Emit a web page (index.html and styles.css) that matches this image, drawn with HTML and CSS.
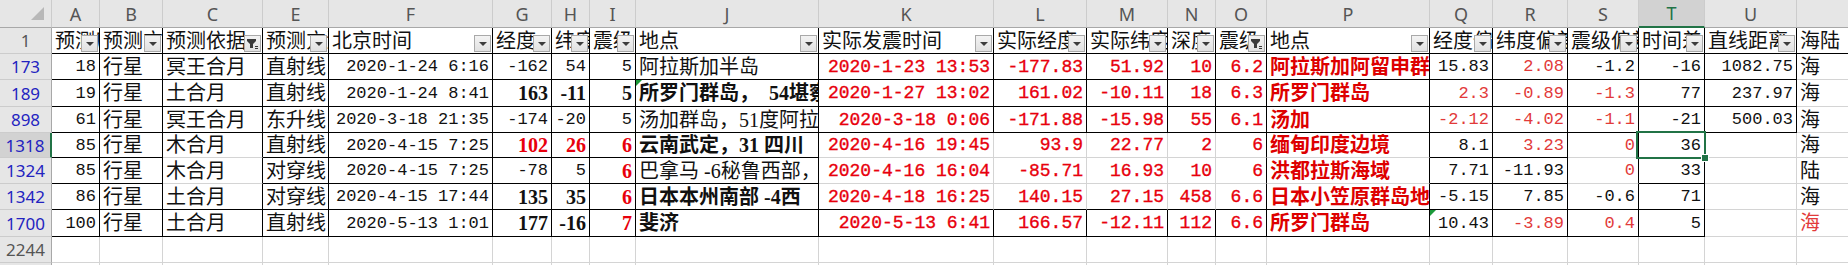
FILE: index.html
```html
<!DOCTYPE html>
<html lang="zh-CN">
<head>
<meta charset="utf-8">
<title>地震预测表</title>
<link rel="stylesheet" href="styles.css">
</head>
<body>
<div class="sheet">
  <!-- column headers -->
  <div class="c ch corner"></div>
  <div class="c ch">A</div><div class="c ch">B</div><div class="c ch">C</div><div class="c ch">E</div>
  <div class="c ch">F</div><div class="c ch">G</div><div class="c ch">H</div><div class="c ch">I</div>
  <div class="c ch">J</div><div class="c ch">K</div><div class="c ch">L</div><div class="c ch">M</div>
  <div class="c ch">N</div><div class="c ch">O</div><div class="c ch">P</div><div class="c ch">Q</div>
  <div class="c ch">R</div><div class="c ch">S</div><div class="c ch chs">T</div><div class="c ch">U</div>
  <div class="c ch"></div>

  <!-- row 1 -->
  <div class="c rh rhg">1</div>
  <div class="c t k">预测序号<span class="fb"></span></div>
  <div class="c t k">预测方式<span class="fb"></span></div>
  <div class="c t k">预测依据<span class="fb ff"><svg viewBox="0 0 15 15" width="15" height="15"><path d="M2 3h9v2l-3 3v4h-3v-4l-3-3z" fill="#3a3a3a"/><rect x="10" y="10" width="3" height="1" fill="#3a3a3a"/><rect x="10" y="12" width="3" height="1" fill="#3a3a3a"/></svg></span></div>
  <div class="c t k">预测方法<span class="fb"></span></div>
  <div class="c t k">北京时间<span class="fb"></span></div>
  <div class="c t k">经度<span class="fb"></span></div>
  <div class="c t k">纬度<span class="fb"></span></div>
  <div class="c t k">震级<span class="fb"></span></div>
  <div class="c t k">地点<span class="fb"></span></div>
  <div class="c t k">实际发震时间<span class="fb"></span></div>
  <div class="c t k">实际经度<span class="fb"></span></div>
  <div class="c t k">实际纬度<span class="fb"></span></div>
  <div class="c t k">深度<span class="fb"></span></div>
  <div class="c t k">震级<span class="fb ff"><svg viewBox="0 0 15 15" width="15" height="15"><path d="M2 3h9v2l-3 3v4h-3v-4l-3-3z" fill="#3a3a3a"/><rect x="10" y="10" width="3" height="1" fill="#3a3a3a"/><rect x="10" y="12" width="3" height="1" fill="#3a3a3a"/></svg></span></div>
  <div class="c t k">地点<span class="fb"></span></div>
  <div class="c t k">经度偏差<span class="fb"></span></div>
  <div class="c t k">纬度偏差<span class="fb"></span></div>
  <div class="c t k">震级偏差<span class="fb"></span></div>
  <div class="c t k">时间差<span class="fb"></span></div>
  <div class="c t k">直线距离<span class="fb"></span></div>
  <div class="c t kb">海陆</div>

  <!-- row 173 -->
  <div class="c rh">173</div>
  <div class="c n k">18</div>
  <div class="c t k">行星</div>
  <div class="c t k">冥王合月</div>
  <div class="c t k">直射线</div>
  <div class="c n k">2020-1-24 6:16</div>
  <div class="c n k">-162</div>
  <div class="c n k">54</div>
  <div class="c n k">5</div>
  <div class="c t k">阿拉斯加半岛</div>
  <div class="c n nr k">2020-1-23 13:53</div>
  <div class="c n nr k">-177.83</div>
  <div class="c n nr k">51.92</div>
  <div class="c n nr k">10</div>
  <div class="c n nr k">6.2</div>
  <div class="c t tb pr k">阿拉斯加阿留申群岛</div>
  <div class="c n k">15.83</div>
  <div class="c n rl k">2.08</div>
  <div class="c n k">-1.2</div>
  <div class="c n k">-16</div>
  <div class="c n k">1082.75</div>
  <div class="c t">海</div>

  <!-- row 189 -->
  <div class="c rh">189</div>
  <div class="c n k">19</div>
  <div class="c t k">行星</div>
  <div class="c t k">土合月</div>
  <div class="c t k">直射线</div>
  <div class="c n k">2020-1-24 8:41</div>
  <div class="c n b k">163</div>
  <div class="c n b k">-11</div>
  <div class="c n b k">5</div>
  <div class="c t tb k err">所罗门群岛，　54堪察加</div>
  <div class="c n nr k">2020-1-27 13:02</div>
  <div class="c n nr k">161.02</div>
  <div class="c n nr k">-10.11</div>
  <div class="c n nr k">18</div>
  <div class="c n nr k">6.3</div>
  <div class="c t tb pr k">所罗门群岛</div>
  <div class="c n rl k">2.3</div>
  <div class="c n rl k">-0.89</div>
  <div class="c n rl k">-1.3</div>
  <div class="c n k">77</div>
  <div class="c n k">237.97</div>
  <div class="c t">海</div>

  <!-- row 898 -->
  <div class="c rh">898</div>
  <div class="c n k">61</div>
  <div class="c t k">行星</div>
  <div class="c t k">冥王合月</div>
  <div class="c t k">东升线</div>
  <div class="c n k">2020-3-18 21:35</div>
  <div class="c n k">-174</div>
  <div class="c n k">-20</div>
  <div class="c n k">5</div>
  <div class="c t k">汤加群岛，51度阿拉斯加</div>
  <div class="c n nr k">2020-3-18 0:06</div>
  <div class="c n nr k">-171.88</div>
  <div class="c n nr k">-15.98</div>
  <div class="c n nr k">55</div>
  <div class="c n nr k">6.1</div>
  <div class="c t tb pr k">汤加</div>
  <div class="c n rl k">-2.12</div>
  <div class="c n rl k">-4.02</div>
  <div class="c n rl k">-1.1</div>
  <div class="c n k">-21</div>
  <div class="c n k">500.03</div>
  <div class="c t">海</div>

  <!-- row 1318 -->
  <div class="c rh rhs">1318</div>
  <div class="c n k">85</div>
  <div class="c t k">行星</div>
  <div class="c t kr">木合月</div>
  <div class="c t k">直射线</div>
  <div class="c n k">2020-4-15 7:25</div>
  <div class="c n b rb k">102</div>
  <div class="c n b rb k">26</div>
  <div class="c n b rb k">6</div>
  <div class="c t tb k">云南武定，31 四川</div>
  <div class="c n nr">2020-4-16 19:45</div>
  <div class="c n nr">93.9</div>
  <div class="c n nr">22.77</div>
  <div class="c n nr">2</div>
  <div class="c n nr kr">6</div>
  <div class="c t tb pr kr">缅甸印度边境</div>
  <div class="c n k">8.1</div>
  <div class="c n rl k">3.23</div>
  <div class="c n rl kr">0</div>
  <div class="c n k selc">36<span class="sel"><span class="handle"></span></span></div>
  <div class="c n"></div>
  <div class="c t">海</div>

  <!-- row 1324 -->
  <div class="c rh">1324</div>
  <div class="c n k">85</div>
  <div class="c t k">行星</div>
  <div class="c t kr">木合月</div>
  <div class="c t k">对穿线</div>
  <div class="c n k">2020-4-15 7:25</div>
  <div class="c n k">-78</div>
  <div class="c n k">5</div>
  <div class="c n b rb k">6</div>
  <div class="c t k">巴拿马 -6秘鲁西部，</div>
  <div class="c n nr">2020-4-16 16:04</div>
  <div class="c n nr">-85.71</div>
  <div class="c n nr">16.93</div>
  <div class="c n nr">10</div>
  <div class="c n nr kr">6</div>
  <div class="c t tb pr kr">洪都拉斯海域</div>
  <div class="c n k">7.71</div>
  <div class="c n k">-11.93</div>
  <div class="c n rl kr">0</div>
  <div class="c n k">33</div>
  <div class="c n"></div>
  <div class="c t">陆</div>

  <!-- row 1342 -->
  <div class="c rh">1342</div>
  <div class="c n k">86</div>
  <div class="c t k">行星</div>
  <div class="c t k">土合月</div>
  <div class="c t k">对穿线</div>
  <div class="c n k">2020-4-15 17:44</div>
  <div class="c n b k">135</div>
  <div class="c n b k">35</div>
  <div class="c n b rb k">6</div>
  <div class="c t tb k">日本本州南部 -4西</div>
  <div class="c n nr kb">2020-4-18 16:25</div>
  <div class="c n nr kb">140.15</div>
  <div class="c n nr kb">27.15</div>
  <div class="c n nr kb">458</div>
  <div class="c n nr k">6.6</div>
  <div class="c t tb pr k">日本小笠原群岛地区</div>
  <div class="c n k">-5.15</div>
  <div class="c n k">7.85</div>
  <div class="c n k">-0.6</div>
  <div class="c n k">71</div>
  <div class="c n"></div>
  <div class="c t">海</div>

  <!-- row 1700 -->
  <div class="c rh">1700</div>
  <div class="c n k">100</div>
  <div class="c t k">行星</div>
  <div class="c t k">土合月</div>
  <div class="c t k">直射线</div>
  <div class="c n k">2020-5-13 1:01</div>
  <div class="c n b k">177</div>
  <div class="c n b k">-16</div>
  <div class="c n b rb k">7</div>
  <div class="c t tb k">斐济</div>
  <div class="c n nr k">2020-5-13 6:41</div>
  <div class="c n nr k">166.57</div>
  <div class="c n nr k">-12.11</div>
  <div class="c n nr k">112</div>
  <div class="c n nr k">6.6</div>
  <div class="c t tb pr k">所罗门群岛</div>
  <div class="c n k err">10.43</div>
  <div class="c n rl k">-3.89</div>
  <div class="c n rl k">0.4</div>
  <div class="c n k">5</div>
  <div class="c n"></div>
  <div class="c t rl">海</div>

  <!-- row 2244 -->
  <div class="c rh rhg">2244</div>
  <div class="c"></div><div class="c"></div><div class="c"></div><div class="c"></div>
  <div class="c"></div><div class="c"></div><div class="c"></div><div class="c"></div>
  <div class="c"></div><div class="c"></div><div class="c"></div><div class="c"></div>
  <div class="c"></div><div class="c"></div><div class="c"></div><div class="c"></div>
  <div class="c"></div><div class="c"></div><div class="c"></div><div class="c"></div>
  <div class="c"></div>

  <!-- partially visible row -->
  <div class="c rh"></div>
  <div class="c"></div><div class="c"></div><div class="c"></div><div class="c"></div>
  <div class="c"></div><div class="c"></div><div class="c"></div><div class="c"></div>
  <div class="c"></div><div class="c"></div><div class="c"></div><div class="c"></div>
  <div class="c"></div><div class="c"></div><div class="c"></div><div class="c"></div>
  <div class="c"></div><div class="c"></div><div class="c"></div><div class="c"></div>
  <div class="c"></div>
</div>
</body>
</html>
```

FILE: styles.css
```css
html, body {
  margin: 0;
  padding: 0;
  background: #ffffff;
  overflow: hidden;
}

.sheet {
  display: grid;
  grid-template-columns: 52px 48px 63px 100px 66px 164px 59px 38px 46px 183px 175px 93px 81px 48px 51px 163px 63px 75px 71px 66px 92px 60px;
  grid-template-rows: 28px 26px 26px 27px 26px 25px 26px 26px 27px 26px 26px;
  width: 1848px;
  height: 265px;
  overflow: hidden;
}

.c {
  box-sizing: border-box;
  border-right: 1px solid #d4d4d4;
  border-bottom: 1px solid #d4d4d4;
  overflow: hidden;
  white-space: nowrap;
  display: flex;
  align-items: center;
  padding: 0 3px;
  position: relative;
  color: #111111;
  min-width: 0;
  line-height: 1;
}

/* black borders */
.k { border-right-color: #000; border-bottom-color: #000; }
.kr { border-right-color: #000; }
.kb { border-bottom-color: #000; }

/* column header */
.ch {
  background: #e6e6e6;
  justify-content: center;
  font-family: "Noto Sans", "Open Sans", sans-serif;
  font-size: 18px;
  color: #555555;
  border-right-color: #cccccc;
  border-bottom-color: #a8a8a8;
  padding: 0;
}
.chs {
  background: #d2d2d2;
  color: #217346;
  border-bottom: 2px solid #217346;
}
.corner::after {
  content: "";
  position: absolute;
  right: 7px;
  bottom: 7px;
  border-left: 13px solid transparent;
  border-bottom: 13px solid #b8b8b8;
}

/* row header */
.rh {
  background: #e6e6e6;
  justify-content: center;
  font-family: "Noto Sans", "Open Sans", sans-serif;
  font-size: 17px;
  color: #2323c0;
  border-right-color: #a8a8a8;
  border-bottom-color: #cccccc;
  padding: 0;
}
.rhg { color: #555555; }
.rhs {
  background: #d2d2d2;
  border-right: 2px solid #217346;
}

/* text cells */
.t {
  font-family: "Liberation Serif", "Noto Sans CJK SC", serif;
  font-size: 20px;
}
.tb { font-weight: bold; }
.pr { color: #dd0000; }

/* numeric cells */
.n {
  justify-content: flex-end;
  font-family: "Liberation Mono", "DejaVu Sans Mono", monospace;
  font-size: 17px;
}
.nr {
  color: #e8000c;
  font-size: 18px;
  -webkit-text-stroke: 0.35px #e8000c;
}
.b {
  font-family: "Liberation Serif", serif;
  font-weight: bold;
  font-size: 20px;
}
.rb { color: #e8000c; }
.rl { color: #e23a3a; }

/* filter buttons */
.fb {
  position: absolute;
  right: 1px;
  bottom: 1px;
  width: 17px;
  height: 17px;
  box-sizing: border-box;
  border: 1px solid #a9a9a9;
  background: linear-gradient(#f3f3f3, #e1e1e1);
  display: flex;
  align-items: center;
  justify-content: center;
}
.fb::after {
  content: "";
  border-left: 4px solid transparent;
  border-right: 4px solid transparent;
  border-top: 4px solid #3c3c3c;
  margin-top: 1px;
}
.fb.ff::after { display: none; }
.fb svg { display: block; }

/* error indicator */
.err::before {
  content: "";
  position: absolute;
  left: 0;
  top: 0;
  border-top: 6px solid #1c9a3a;
  border-right: 6px solid transparent;
}

/* selected cell */
.selc { overflow: visible; z-index: 2; }
.sel {
  position: absolute;
  left: -3px;
  top: -2px;
  right: -2px;
  bottom: -2px;
  border: 2px solid #217346;
}
.handle {
  position: absolute;
  right: -5px;
  bottom: -5px;
  width: 6px;
  height: 6px;
  background: #217346;
  border: 1px solid #ffffff;
}
```
